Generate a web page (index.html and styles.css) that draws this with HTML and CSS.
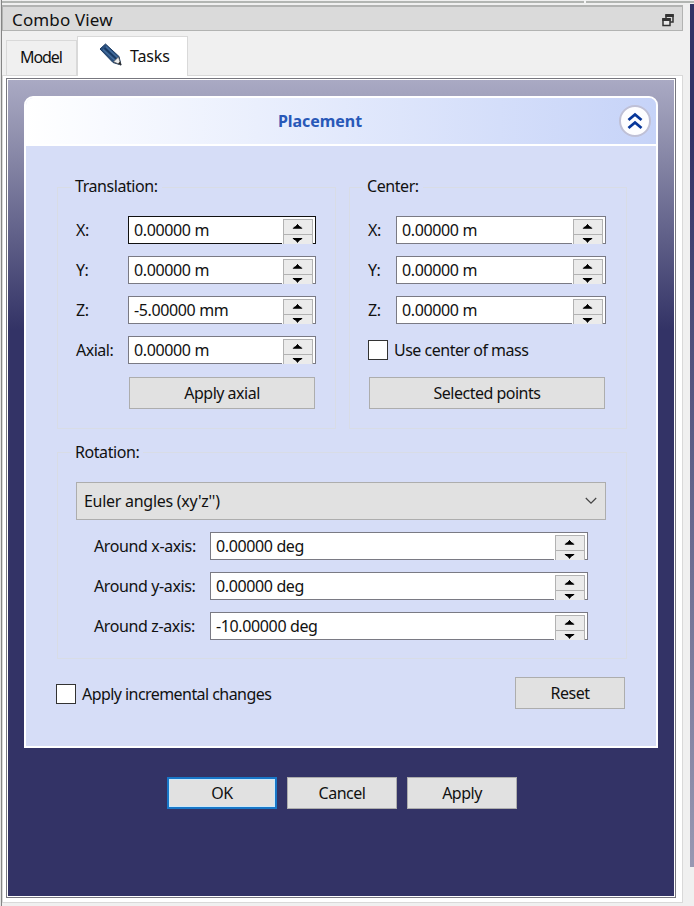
FILE: index.html
```html
<!DOCTYPE html>
<html lang="en">
<head>
<meta charset="utf-8">
<title>Combo View</title>
<link rel="stylesheet" href="styles.css">
</head>
<body>
<svg class="defs" width="0" height="0" aria-hidden="true">
  <symbol id="arrows" viewBox="0 0 30 25">
    <path d="M9.500 9h10v-1h-1v-1h-1.500v-1h-1v-1h-1v-1h-1v1h-1v1h-1v1h-1.500v1h-1z" fill="#000"/>
    <path d="M9.500 19h10v1h-1v1h-1.500v1h-1v1h-1v1h-1v-1h-1v-1h-1v-1h-1.500v-1h-1z" fill="#000"/>
  </symbol>
</svg>
<div class="window">
  <div class="left-edge"></div>
  <main class="dock">
    <div class="toolbar-edge"><i></i></div>
    <header class="titlebar">
      <span>Combo View</span>
      <svg width="12" height="14" viewBox="0 0 12 14"><path d="M4 7V2h7v7H8" fill="none" stroke="#333" stroke-width="1.5"/><path d="M3.500 2.500h8.200" stroke="#333" stroke-width="3"/><path d="M1 6h7v6.500H1z" fill="#e8e8e8" stroke="#333" stroke-width="1.5"/><path d="M.3 6.500h8.400" stroke="#333" stroke-width="3"/></svg>
    </header>
    <nav class="tabs">
      <div class="tab"><span class="t-model">Model</span></div>
      <div class="tab active">
        <svg width="24" height="24" viewBox="0 0 24 24"><path d="M1 6L6.500 1 20 13.500 22 22 14 19.500Z" fill="#294f7e" stroke="#1b3a62" stroke-width="1"/><path d="M4 6.500L16.500 18M7 3.500L19 15" stroke="#456f9f" stroke-width="1.1"/><path d="M5.500 5L18 16.500" stroke="#16365f" stroke-width="1.3"/><path d="M14.500 18.800L19.500 14 22 22Z" fill="#eee" stroke="#555" stroke-width=".7"/><path d="M19 20.500L21.200 18.500 22.300 22.300Z" fill="#222"/></svg>
        <span class="t-tasks">Tasks</span>
      </div>
    </nav>
    <section class="pane">
      <div class="panel">
        <div class="card">
          <div class="card-head">
            <h1>Placement</h1>
            <svg class="collapse" width="32" height="34" viewBox="0 0 32 34"><circle cx="16" cy="17" r="15" fill="#fdfdff" stroke="#bfc0d6" stroke-width="2"/><path d="M9.500 16L16 10.500L22.500 16M9.500 24L16 18.500L22.500 24" fill="none" stroke="#07369a" stroke-width="2.800"/></svg>
          </div>
          <div class="card-body">
            <div class="groups">
              <section class="group translation">
                <h2>Translation:</h2>
                <div class="rows">
                  <label>X:</label><div class="field focus"><span>0.00000 m</span><svg class="spin"><use href="#arrows"/></svg></div>
                  <label>Y:</label><div class="field"><span>0.00000 m</span><svg class="spin"><use href="#arrows"/></svg></div>
                  <label>Z:</label><div class="field"><span>-5.00000 mm</span><svg class="spin"><use href="#arrows"/></svg></div>
                  <label>Axial:</label><div class="field"><span>0.00000 m</span><svg class="spin"><use href="#arrows"/></svg></div>
                </div>
                <button class="axial">Apply axial</button>
              </section>
              <section class="group center">
                <h2>Center:</h2>
                <div class="rows">
                  <label>X:</label><div class="field"><span>0.00000 m</span><svg class="spin"><use href="#arrows"/></svg></div>
                  <label>Y:</label><div class="field"><span>0.00000 m</span><svg class="spin"><use href="#arrows"/></svg></div>
                  <label>Z:</label><div class="field"><span>0.00000 m</span><svg class="spin"><use href="#arrows"/></svg></div>
                </div>
                <div class="check mass"><i></i><span>Use center of mass</span></div>
                <button class="points">Selected points</button>
              </section>
            </div>
            <section class="group rotation">
              <h2>Rotation:</h2>
              <div class="combo"><span>Euler angles (xy'z'')</span><svg width="12" height="8" viewBox="0 0 12 8"><path d="M.8 1L6 6.200 11.200 1" fill="none" stroke="#444" stroke-width="1.200"/></svg></div>
              <div class="rows">
                <label>Around x-axis:</label><div class="field"><span>0.00000 deg</span><svg class="spin"><use href="#arrows"/></svg></div>
                <label>Around y-axis:</label><div class="field"><span>0.00000 deg</span><svg class="spin"><use href="#arrows"/></svg></div>
                <label>Around z-axis:</label><div class="field"><span>-10.00000 deg</span><svg class="spin"><use href="#arrows"/></svg></div>
              </div>
            </section>
            <div class="bottom">
              <div class="check"><i></i><span>Apply incremental changes</span></div>
              <button class="small">Reset</button>
            </div>
          </div>
        </div>
        <footer class="actions">
          <button class="small default">OK</button>
          <button class="small">Cancel</button>
          <button class="small">Apply</button>
        </footer>
      </div>
    </section>
  </main>
  <aside class="viewport"></aside>
</div>
</body>
</html>
```
FILE: styles.css
```css
* { box-sizing: border-box; }
body {
  margin: 0;
  background: #f0f0f0;
  color: #111;
  font: 16px/20px "Noto Sans", sans-serif;
  letter-spacing: -0.5px;
  white-space: nowrap;
}
.defs { display: block; }
.window { display: flex; height: 906px; overflow: hidden; }
.left-edge { width: 2px; background: #e4e4e4; border-right: 1px solid #858585; }
.dock { width: 681px; }
.toolbar-edge { height: 5px; padding-top: 1px; }
.toolbar-edge::before { content: ""; display: block; width: 692px; height: 2px; background: #b2b5b2; }
.toolbar-edge i { display: block; width: 2px; height: 3px; margin: -3px 0 0 582px; background: #f4f4f4; }
.titlebar {
  display: flex;
  align-items: center;
  justify-content: space-between;
  height: 26px;
  padding: 3px 8px 0 9px;
  border: 1px solid #b2b3b2;
  border-width: 2px 1px 1px;
  background: #dadada;
  font-size: 17px;
  letter-spacing: 0.15px;
}
.titlebar svg { margin-top: -1px; }
.tabs { display: flex; align-items: flex-end; height: 44px; padding-left: 4px; }
.tab { width: 71px; height: 35px; padding: 6px 0 0 13px; border: 1px solid #d9d9d9; border-bottom: 0; }
.t-model { letter-spacing: -1.1px; }
.tab.active {
  display: flex;
  gap: 7px;
  width: 111px;
  height: 40px;
  margin-bottom: -1px;
  padding: 6px 0 0 21px;
  background: #fff;
  z-index: 1;
}
.tab.active span { padding-top: 3px; letter-spacing: -0.15px; }
.pane { height: 828px; padding: 2px 5px 5px 3px; border: 1px solid #d9d9d9; background: #fff; width: 681px; }
.panel {
  width: 670px;
  height: 820px;
  padding: 16px 16px 0;
  border: 1px solid #77777f;
  outline: 1px solid #fff;
  outline-offset: -2px;
  background: linear-gradient(#aaaac4, #9292af 55px, #333366 250px);
}
.card {
  height: 652px;
  margin-top: 1px;
  width: 634px;
  margin-left: 1px;
  border: 2px solid #fff;
  border-radius: 9px 9px 0 0;
  background: #d6ddf7;
  overflow: hidden;
}
.card-head {
  display: flex;
  align-items: center;
  height: 48px;
  border-bottom: 2px solid #fff;
  background: linear-gradient(90deg, #fff, #f8faff 12%, #c6d3f8);
}
h1 { flex: 1; margin: 0; padding-right: 5px; font-size: 16px; line-height: 20px; letter-spacing: -0.05px; text-align: center; color: #2858b8; }
.collapse { margin-right: 5px; }
.card-body { padding: 41px 29px 0 31px; }
.groups { display: flex; gap: 13px; }
.group { border: 1px solid #d8dce6; height: 242px; }
h2 { width: max-content; margin: -12px 0 0 13px; padding: 0 4px; background: #d6ddf7; font-size: 16px; line-height: 20px; font-weight: 400; letter-spacing: -0.43px; }
.rows { display: grid; grid-auto-rows: 28px; row-gap: 12px; align-items: center; }
.translation { width: 279px; }
.center { width: 278px; }
.translation .rows { grid-template-columns: 52px 188px; margin: 20px 0 0 18px; }
.center .rows { grid-template-columns: 28px 210px; margin: 20px 0 0 18px; }
.field { display: flex; justify-content: space-between; height: 28px; padding-left: 5px; border: 1px solid #7a7a84; background: #fff; letter-spacing: -0.37px; }
.field span { padding-top: 3px; }
.field.focus { border-color: #111; }
.spin { width: 30px; height: 25px; margin: 2px 2px -1px 0; border: 1px solid #b2b2b2; border-bottom: 0; background: linear-gradient(#ebebeb 14px, #b2b2b2 14px, #b2b2b2 15px, #ebebeb 15px); box-shadow: -1px 0 #fff; }
button {
  display: block;
  height: 32px;
  padding: 0;
  border: 1px solid #adadad;
  border-radius: 0;
  background: #e1e1e1;
  color: #111;
  font: inherit;
  letter-spacing: inherit;
  text-align: center;
}
.axial { width: 186px; margin: 13px 0 0 71px; }
.points { width: 236px; margin: 17px 0 0 19px; }
.check { display: flex; align-items: center; gap: 6px; height: 20px; }
.check i { width: 20px; height: 20px; border: 1px solid #333; background: #fff; }
.mass { margin: 16px 0 0 18px; }
.rotation { width: 570px; height: 207px; margin-top: 23px; }
.rotation h2 { margin-top: -11px; }
.combo {
  display: flex;
  align-items: center;
  justify-content: space-between;
  width: 530px;
  height: 38px;
  margin: 20px 0 12px 18px;
  padding: 0 8px 0 7px;
  border: 1px solid #adadad;
  background: #e1e1e1;
  letter-spacing: -0.28px;
}
.rotation .rows { grid-template-columns: 116px 378px; margin-left: 36px; }
.rotation label { letter-spacing: -0.38px; }
.bottom { display: flex; justify-content: space-between; align-items: center; height: 32px; margin: 18px 2px 0 -1px; }
.bottom .check { margin-top: 2px; letter-spacing: -0.56px; }
.small { width: 110px; }
.actions { display: flex; gap: 10px; margin: 29px 0 0 144px; }
.default { border: 2px solid #1877c8; box-shadow: inset 0 0 0 1px #cce8fa; }
.viewport { width: 4px; height: 863px; margin: 4px 0 0 7px; background: linear-gradient(#333366, #333366 15%, #9898b2); }
```
